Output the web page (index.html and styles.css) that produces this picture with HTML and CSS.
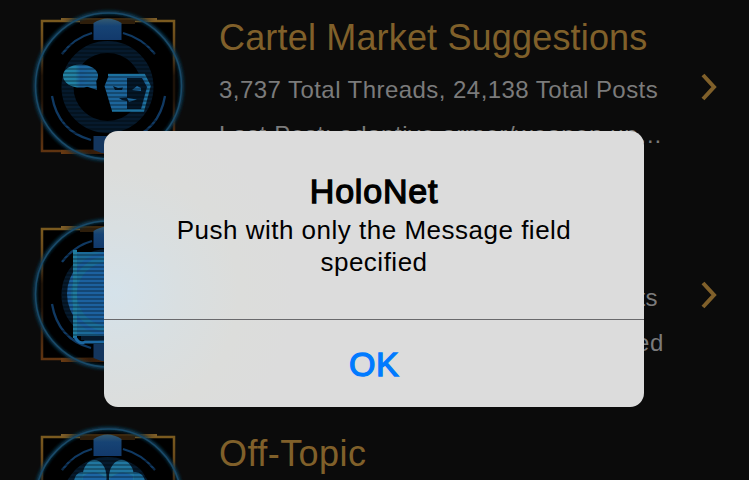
FILE: index.html
```html
<!DOCTYPE html>
<html lang="en">
<head>
<meta charset="utf-8">
<title>HoloNet</title>
<link rel="stylesheet" href="styles.css">
</head>
<body>
<svg width="0" height="0" class="defs" aria-hidden="true">
  <defs>
    <linearGradient id="gold" x1="0" y1="0" x2="0" y2="1">
      <stop offset="0" stop-color="#7a5a1f"/><stop offset=".25" stop-color="#5f3f17"/><stop offset=".42" stop-color="#1d1208"/><stop offset=".6" stop-color="#1d1208"/><stop offset=".8" stop-color="#43260f"/><stop offset="1" stop-color="#5f3411"/>
    </linearGradient>
    <linearGradient id="fade"><stop offset="0" stop-color="#80602a"/><stop offset=".25" stop-color="#3c280e"/><stop offset=".75" stop-color="#3c280e"/><stop offset="1" stop-color="#80602a"/></linearGradient>
    <linearGradient id="fadeLow"><stop offset="0" stop-color="#693b13"/><stop offset=".3" stop-color="#351c09"/><stop offset="1" stop-color="#693b13"/></linearGradient>
    <linearGradient id="bubble"><stop offset="0" stop-color="#2285a5"/><stop offset=".35" stop-color="#2180a4"/><stop offset=".5" stop-color="#1c629c"/><stop offset="1" stop-color="#1c6b9c"/></linearGradient>
    <linearGradient id="tab" x1="0" y1="0" x2="0" y2="1"><stop offset="0" stop-color="#345a70"/><stop offset=".35" stop-color="#164374"/><stop offset="1" stop-color="#12396b"/></linearGradient>
    <pattern id="lines" width="4" height="4" patternUnits="userSpaceOnUse"><rect width="4" height="2" fill="#000" opacity=".28"/></pattern>
    <filter id="soft" x="-10%" y="-10%" width="120%" height="120%"><feGaussianBlur stdDeviation="1.5"/></filter>
    <g id="ring">
      <circle cx="84.500" cy="86" r="73" fill="#000" opacity=".6"/>
      <rect x="18" y="21" width="132" height="130" fill="#000" stroke="url(#gold)" stroke-width="2.500"/>
      <rect x="37" y="18" width="96" height="3" fill="url(#fade)"/>
      <rect x="56" y="20" width="55" height="4" fill="#2e1e0b"/>
      <rect x="37" y="150" width="96" height="4" fill="url(#fadeLow)"/>
      <circle cx="84.500" cy="86" r="73.500" fill="none" stroke="#0f3a55" stroke-width="3.500" filter="url(#soft)"/>
      <circle cx="84.500" cy="86" r="73" fill="none" stroke="#194a68" stroke-width="1.500"/>
      <circle cx="83.500" cy="87" r="40" fill="none" stroke="#061a2d" stroke-width="12"/>
      <g fill="none" stroke="#103962" stroke-width="2.300">
        <path d="M38 54Q50 38 68 33M99 33Q118 38 131 54"/>
        <path d="M28 96Q34 131 67 140M141 96Q135 131 102 140"/>
      </g>
      <path d="M69.500 40V23Q83.500 14 97.500 23V40Z" fill="url(#tab)"/>
      <path d="M69.500 136H97.500V150Q83.500 157 69.500 150Z" fill="#14365e"/>
    </g>
  </defs>
</svg>
<main class="screen">
  <section class="row">
    <svg class="icon" viewBox="0 0 170 170">
      <use href="#ring"/>
      <ellipse cx="56.500" cy="76" rx="17.500" ry="11.500" fill="url(#bubble)"/>
      <path d="M61 86L73 90L72 78Z" fill="#1c6599"/>
      <path d="M85 75H120L126 86L119 111H88L80.500 86Z" fill="#1c659b"/>
      <path d="M103 78H118L123 87L117 109H103Z" fill="#041728"/>
      <path d="M84 75H120L125.500 86L119 110.500H88" fill="none" stroke="#1d719e" stroke-width="2.500"/>
      <path d="M89 86L94 88L99 87.500L98 90L91 90ZM95 98L103 97.500V101L98 100Z" fill="#041728"/>
      <path d="M108 90L113 86L117 88V91ZM103 98L113 99.500L105 102Z" fill="#1b659a"/>
      <rect x="38" y="44" width="94" height="92" fill="url(#lines)"/>
    </svg>
    <div class="copy">
      <h2>Cartel Market Suggestions</h2>
      <p>3,737 Total Threads, 24,138 Total Posts</p>
      <p class="last">Last Post: adaptive armor/weapon up…</p>
    </div>
    <svg class="chevron" viewBox="0 0 18 28"><path d="M3 2L14 14L3 26"/></svg>
  </section>
  <section class="row">
    <svg class="icon" viewBox="0 0 170 170">
      <use href="#ring"/>
      <g transform="translate(0 2)">
        <path d="M49 42H121V126H49Z" fill="#1b6a98"/>
        <circle cx="85" cy="84" r="42" fill="#1c619f"/>
        <circle cx="85" cy="84" r="35" fill="none" stroke="#1b6e9a" stroke-width="6"/>
        <path d="M51 40V128" stroke="#207c9f" stroke-width="4"/>
        <path d="M51 127Q55 135 61 132H110" fill="none" stroke="#1c68a1" stroke-width="3"/>
        <path d="M57 126H110V130H57Z" fill="#061a2d"/>
        <rect x="38" y="42" width="94" height="84" fill="url(#lines)"/>
      </g>
    </svg>
    <div class="copy end">
      <p>Total Posts</p>
      <p class="last">ed</p>
    </div>
    <svg class="chevron" viewBox="0 0 18 28"><path d="M3 2L14 14L3 26"/></svg>
  </section>
  <section class="row">
    <svg class="icon" viewBox="0 0 170 170">
      <use href="#ring"/>
      <g transform="translate(0 -16)">
        <ellipse cx="84" cy="82" rx="38" ry="24" fill="#061a2d"/>
        <ellipse cx="58" cy="82" rx="8" ry="10" fill="#1c6d9c"/><ellipse cx="111" cy="82" rx="10" ry="10" fill="#1c6d9c"/>
        <ellipse cx="70.500" cy="77" rx="12" ry="17" fill="#2177a0"/><ellipse cx="97.500" cy="77" rx="12.500" ry="17" fill="#2177a0"/>
        <path d="M59 76Q70 68 82 78V88H59ZM86 78Q98 68 109 76V88H86Z" fill="#1c65a3"/>
      </g>
      <rect x="38" y="44" width="94" height="92" fill="url(#lines)"/>
    </svg>
    <div class="copy"><h2 class="short">Off-Topic</h2></div>
  </section>
</main>
<div class="alert" role="alertdialog" aria-labelledby="alert-title">
  <div class="message">
    <h1 id="alert-title">HoloNet</h1>
    <p>Push with only the Message field<br>specified</p>
  </div>
  <button type="button">OK</button>
</div>
</body>
</html>
```
FILE: styles.css
```css
* { box-sizing: border-box; }
body {
  margin: 0;
  width: 749px;
  height: 480px;
  overflow: hidden;
  position: relative;
  background: #0b0b0b;
  font-family: "Liberation Sans", Arial, sans-serif;
}
h1, h2, p { margin: 0; font-weight: 400; }
.defs { position: absolute; }
.screen { height: 480px; overflow: hidden; }
.row { display: flex; height: 208px; padding-left: 24px; }
.icon { flex: none; width: 170px; height: 170px; }
.copy {
  width: 439px;
  margin-left: 25px;
  padding-top: 17px;
  color: #7b7b7b;
  white-space: nowrap;
}
.copy h2 { font-size: 36px; line-height: 41px; letter-spacing: .17px; color: #80602a; }
.copy .short { letter-spacing: .45px; }
.copy p { margin-top: 17px; font-size: 24px; line-height: 28px; letter-spacing: .45px; }
.copy h2 + p { margin-top: 18px; }
.copy .last { letter-spacing: .62px; }
.end { padding-top: 59px; text-align: right; }
.end .last { margin-right: -6px; }
.chevron {
  flex: none;
  width: 18px;
  height: 28px;
  margin: 73px 0 0 42px;
  fill: none;
  stroke: #80602a;
  stroke-width: 4;
}
.alert {
  position: absolute;
  left: 104px;
  top: 131px;
  width: 540px;
  height: 276px;
  display: flex;
  flex-direction: column;
  overflow: hidden;
  border-radius: 14px;
  background: radial-gradient(circle at 10px 162px, #d5e2ea 0, #d9dfe1 65px, #dcdddb 125px, #dcdcdc 180px);
  color: #000;
  text-align: center;
}
.message { height: 189px; padding-top: 40px; border-bottom: 1px solid #69696c; }
.message h1 {
  font-size: 34px;
  line-height: 40px;
  letter-spacing: .8px;
  -webkit-text-stroke: 1.3px #000;
}
.message p { padding-top: 3px; font-size: 26px; line-height: 32px; letter-spacing: .5px; }
.alert button {
  flex: 1;
  padding: 2px 0 0;
  border: 0;
  background: none;
  color: #007aff;
  font: 400 34px "Liberation Sans", Arial, sans-serif;
  letter-spacing: .5px;
  -webkit-text-stroke: 1.3px #007aff;
}
```
